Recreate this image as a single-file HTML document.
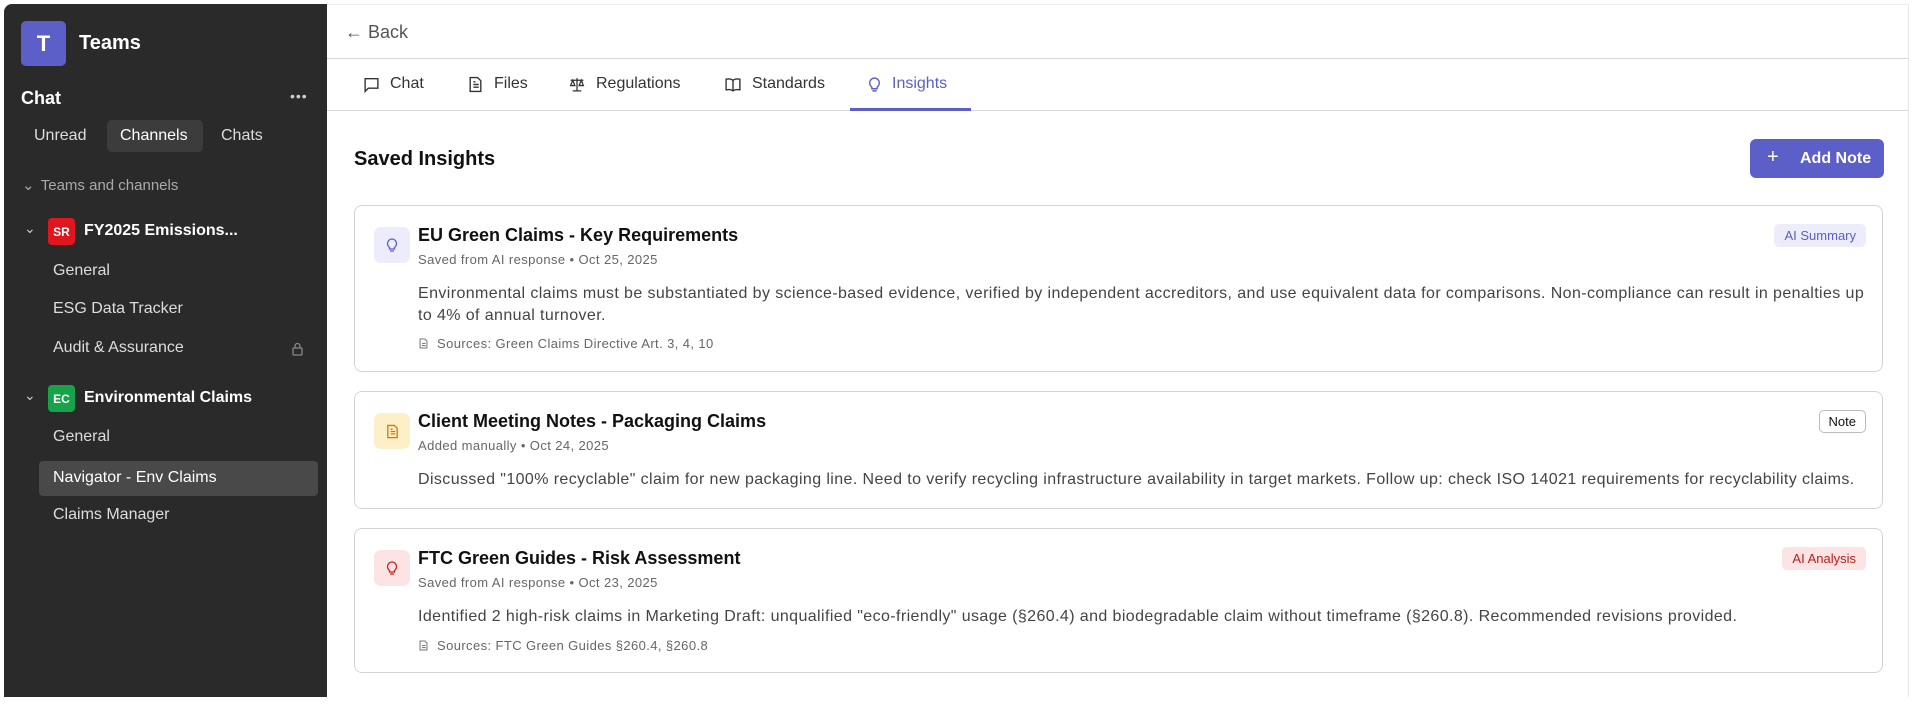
<!DOCTYPE html>
<html><head><meta charset="utf-8"><style>
*{box-sizing:border-box;margin:0;padding:0}
body{width:1916px;height:720px;background:#fff;font-family:"Liberation Sans",sans-serif;position:relative;overflow:hidden;color:#111}
.abs{position:absolute}
.sb{left:4px;top:4px;width:323px;height:693px;background:#2b2a2a;border-radius:8px 0 0 0;color:#fff}
.sb .t{white-space:nowrap}
.main{left:327px;top:4px;width:1582px;height:693px;background:#fff;border-right:1px solid #e6e6e6;border-top:1px solid #eee}
.tab{position:absolute;top:70px;font-size:16px;color:#333;display:flex;align-items:center;gap:10px}
.card{position:absolute;left:354px;width:1529px;border:1px solid #d4d4d4;border-radius:8px;background:#fff}
.ico{position:absolute;left:19px;top:21px;width:36px;height:36px;border-radius:7px;display:flex;align-items:center;justify-content:center}
.ttl{position:absolute;left:63px;top:19px;font-size:18px;font-weight:bold;color:#111}
.meta{position:absolute;left:63px;top:46px;font-size:13px;color:#666;letter-spacing:0.4px}
.body{position:absolute;left:63px;font-size:16px;letter-spacing:0.4px;color:#444;line-height:22px;width:1450px}
.src{position:absolute;left:63px;font-size:13px;color:#666;display:flex;align-items:center;gap:8px;letter-spacing:0.4px}
.badge{position:absolute;right:16px;top:18px;font-size:13px;padding:4px 10px;border-radius:5px}
</style></head><body>
<div class="abs sb">
 <div class="abs" style="left:17px;top:17px;width:45px;height:45px;background:#5b5fc7;border-radius:5px;display:flex;align-items:center;justify-content:center;font-size:22px;font-weight:bold">T</div>
 <div class="abs t" style="left:75px;top:28px;font-size:20px;font-weight:bold">Teams</div>
 <div class="abs t" style="left:17px;top:84px;font-size:18px;font-weight:bold">Chat</div>
 <div class="abs t" style="left:286px;top:84px;font-size:14px;color:#ccc;letter-spacing:1px">•••</div>
 <div class="abs t" style="left:30px;top:123px;font-size:16px;color:#ddd">Unread</div>
 <div class="abs" style="left:103px;top:116px;width:96px;height:32px;background:#3d3c3c;border-radius:5px"></div>
 <div class="abs t" style="left:116px;top:123px;font-size:16px;color:#fff">Channels</div>
 <div class="abs t" style="left:217px;top:123px;font-size:16px;color:#ddd">Chats</div>
 <div class="abs t" style="left:18px;top:172px;font-size:15px;color:#aaa">⌄ <span style="margin-left:2px">Teams and channels</span></div>
 <div class="abs t" style="left:20px;top:216px;font-size:14px;color:#ccc">⌄</div>
 <div class="abs" style="left:44px;top:214px;width:27px;height:27px;background:#e0161e;border-radius:4px;font-size:12px;font-weight:bold;display:flex;align-items:center;justify-content:center">SR</div>
 <div class="abs t" style="left:80px;top:218px;font-size:16px;font-weight:bold">FY2025 Emissions...</div>
 <div class="abs t" style="left:49px;top:258px;font-size:16px;color:#ddd">General</div>
 <div class="abs t" style="left:49px;top:296px;font-size:16px;color:#ddd">ESG Data Tracker</div>
 <div class="abs t" style="left:49px;top:335px;font-size:16px;color:#ddd">Audit &amp; Assurance</div>
 <svg class="abs" style="left:287px;top:338px" width="13" height="14" viewBox="0 0 13 14" fill="none" stroke="#888" stroke-width="1.3"><rect x="2" y="6" width="9" height="7" rx="1"/><path d="M4 6V4a2.5 2.5 0 015 0v2"/></svg>
 <div class="abs t" style="left:20px;top:383px;font-size:14px;color:#ccc">⌄</div>
 <div class="abs" style="left:44px;top:381px;width:27px;height:27px;background:#16a34a;border-radius:4px;font-size:12px;font-weight:bold;display:flex;align-items:center;justify-content:center">EC</div>
 <div class="abs t" style="left:80px;top:385px;font-size:16px;font-weight:bold">Environmental Claims</div>
 <div class="abs t" style="left:49px;top:424px;font-size:16px;color:#ddd">General</div>
 <div class="abs" style="left:35px;top:457px;width:279px;height:35px;background:#4a4949;border-radius:4px"></div>
 <div class="abs t" style="left:49px;top:465px;font-size:16px;color:#fff">Navigator - Env Claims</div>
 <div class="abs t" style="left:49px;top:502px;font-size:16px;color:#ddd">Claims Manager</div>
</div>
<div class="abs main">
 <div class="abs" style="left:18px;top:17px;font-size:18px;color:#555">← Back</div>
 <div class="abs" style="left:0;top:53px;width:1582px;height:1px;background:#d8d8d8"></div>
 <div class="tab" style="left:36px"><svg width="17" height="17" viewBox="0 0 16 16" fill="none" stroke="#333" stroke-width="1.3"><path d="M2 2.5h12v9H5l-3 3z"/></svg>Chat</div>
 <div class="tab" style="left:140px"><svg width="17" height="17" viewBox="0 0 16 16" fill="none" stroke="#333" stroke-width="1.3"><path d="M3 1.5h7l3 3v10H3z M6 8h5M6 10.5h5M6 5.5h2"/></svg>Files</div>
 <div class="tab" style="left:241px"><svg width="18" height="17" viewBox="0 0 16 16" fill="none" stroke="#333" stroke-width="1.2"><path d="M8 2v12M4 14h8M2 4h12M4 4l-2 5h4zM12 4l-2 5h4z"/></svg>Regulations</div>
 <div class="tab" style="left:397px"><svg width="18" height="17" viewBox="0 0 16 16" fill="none" stroke="#333" stroke-width="1.3"><path d="M8 4c-2-1.5-4-1.5-6.5-1v10c2.5-.5 4.5-.5 6.5 1 2-1.5 4-1.5 6.5-1V3C12 2.5 10 2.5 8 4zM8 4v10"/></svg>Standards</div>
 <div class="tab" style="left:540px;color:#5b5fc7"><svg width="15" height="17" viewBox="0 0 14 16" fill="none" stroke="#5b5fc7" stroke-width="1.3"><path d="M4.5 10.5C3 9.3 2.5 8 2.5 6.5a4.5 4.5 0 019 0c0 1.5-.5 2.8-2 4v1.5h-5zM5 14h4"/></svg>Insights</div>
 <div class="abs" style="left:0;top:105px;width:1582px;height:1px;background:#d8d8d8"></div>
 <div class="abs" style="left:523px;top:103px;width:121px;height:3px;background:#5b5fc7"></div>
 <div class="abs" style="left:27px;top:143px;font-size:20px;font-weight:bold">Saved Insights</div>
 <div class="abs" style="left:1423px;top:134px;width:134px;height:39px;background:#5b5fc7;border-radius:6px;color:#fff;font-size:16px;font-weight:bold;white-space:nowrap">
  <span style="position:absolute;left:17px;top:7px;font-size:20px;font-weight:normal">+</span>
  <span style="position:absolute;left:50px;top:11px">Add Note</span></div>
</div>
<div class="card" style="top:205px;height:167px">
 <div class="ico" style="background:#ececfa"><svg width="14" height="18" viewBox="0 0 14 16" fill="none" stroke="#5b5fc7" stroke-width="1.3"><path d="M4.5 10.5C3 9.3 2.5 8 2.5 6.5a4.5 4.5 0 019 0c0 1.5-.5 2.8-2 4v1.5h-5zM5 14h4"/></svg></div>
 <div class="ttl">EU Green Claims - Key Requirements</div>
 <div class="meta">Saved from AI response • Oct 25, 2025</div>
 <div class="badge" style="background:#ececfa;color:#5b5fc7">AI Summary</div>
 <div class="body" style="top:77px">Environmental claims must be substantiated by science-based evidence, verified by independent accreditors, and use equivalent data for comparisons. Non-compliance can result in penalties up to 4% of annual turnover.</div>
 <div class="src" style="top:130px"><svg width="11" height="13" viewBox="0 0 16 16" fill="none" stroke="#777" stroke-width="1.5"><path d="M3 1.5h7l3 3v10H3z M6 8h5M6 11h5"/></svg>Sources: Green Claims Directive Art. 3, 4, 10</div>
</div>
<div class="card" style="top:391px;height:118px">
 <div class="ico" style="background:#fdf0c8"><svg width="15" height="17" viewBox="0 0 16 16" fill="none" stroke="#d97706" stroke-width="1.4"><path d="M3 1.5h7l3 3v10H3z M6 8h5M6 10.5h5M6 5.5h2"/></svg></div>
 <div class="ttl">Client Meeting Notes - Packaging Claims</div>
 <div class="meta">Added manually • Oct 24, 2025</div>
 <div class="badge" style="border:1px solid #bbb;color:#111;padding:3px 9px">Note</div>
 <div class="body" style="top:77px">Discussed "100% recyclable" claim for new packaging line. Need to verify recycling infrastructure availability in target markets. Follow up: check ISO 14021 requirements for recyclability claims.</div>
</div>
<div class="card" style="top:528px;height:145px">
 <div class="ico" style="background:#fde4e4"><svg width="14" height="18" viewBox="0 0 14 16" fill="none" stroke="#c81e1e" stroke-width="1.3"><path d="M4.5 10.5C3 9.3 2.5 8 2.5 6.5a4.5 4.5 0 019 0c0 1.5-.5 2.8-2 4v1.5h-5zM5 14h4"/></svg></div>
 <div class="ttl">FTC Green Guides - Risk Assessment</div>
 <div class="meta">Saved from AI response • Oct 23, 2025</div>
 <div class="badge" style="background:#fde4e4;color:#b91c1c">AI Analysis</div>
 <div class="body" style="top:77px">Identified 2 high-risk claims in Marketing Draft: unqualified "eco-friendly" usage (§260.4) and biodegradable claim without timeframe (§260.8). Recommended revisions provided.</div>
 <div class="src" style="top:109px"><svg width="11" height="13" viewBox="0 0 16 16" fill="none" stroke="#777" stroke-width="1.5"><path d="M3 1.5h7l3 3v10H3z M6 8h5M6 11h5"/></svg>Sources: FTC Green Guides §260.4, §260.8</div>
</div>
</body></html>
